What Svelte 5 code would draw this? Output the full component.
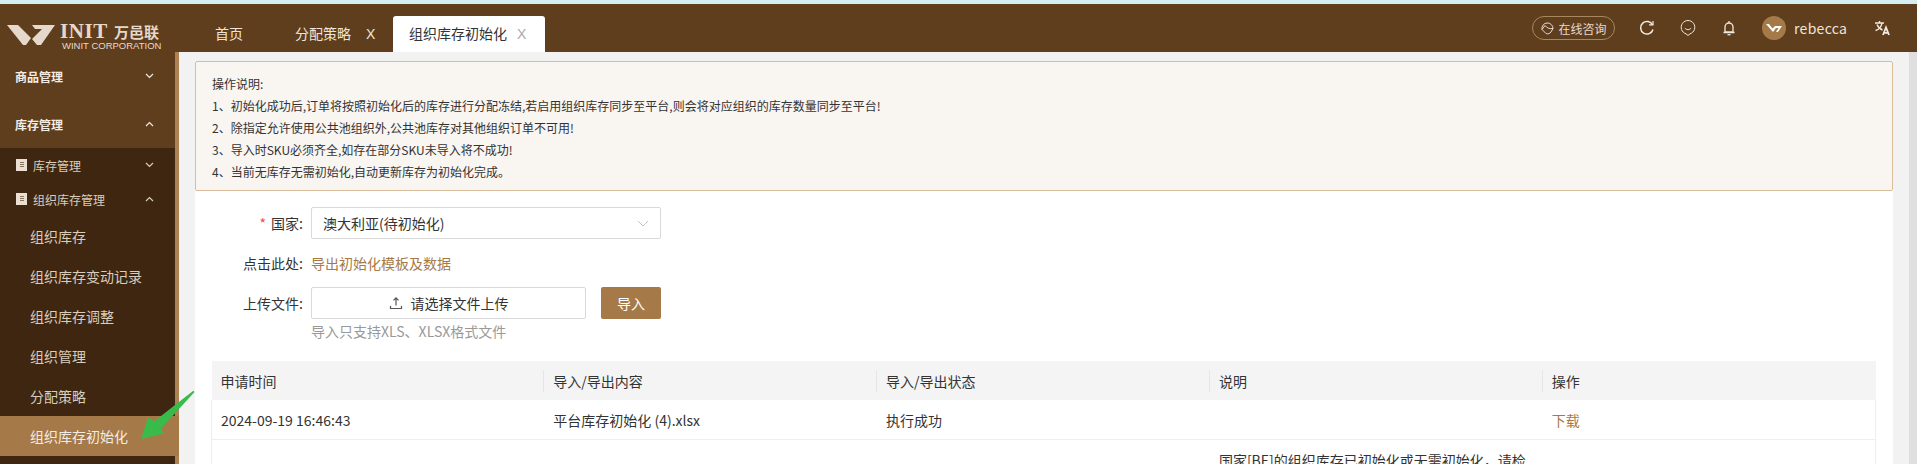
<script>
  const topMenus = [
    { label: '商品管理', open: false },
    { label: '库存管理', open: true }
  ];
  const groups = [
    { label: '库存管理', open: false },
    { label: '组织库存管理', open: true }
  ];
  const leaves = ['组织库存', '组织库存变动记录', '组织库存调整', '组织管理', '分配策略', '组织库存初始化'];
  const notes = [
    '操作说明:',
    '1、初始化成功后,订单将按照初始化后的库存进行分配冻结,若启用组织库存同步至平台,则会将对应组织的库存数量同步至平台!',
    '2、除指定允许使用公共池组织外,公共池库存对其他组织订单不可用!',
    '3、导入时SKU必须齐全,如存在部分SKU未导入将不成功!',
    '4、当前无库存无需初始化,自动更新库存为初始化完成。'
  ];
  const columns = ['申请时间', '导入/导出内容', '导入/导出状态', '说明', '操作'];
</script>

<div class="page">
  <header class="topbar">
    <div class="logo">
      <svg class="mark" width="48" height="22" viewBox="0 0 48 22">
        <path d="M0 1h11l13 13-5 7h-3z" fill="#e6d9cb" />
        <path d="M25 1h23L34 21h-4l-5-6 10-10h-7z" fill="#e6d9cb" />
      </svg>
      <div class="logo-text">
        <div class="logo-top"><span class="init">INIT</span><span class="cn">万邑联</span></div>
        <div class="logo-sub">WINIT CORPORATION</div>
      </div>
    </div>

    <nav class="tabs">
      <div class="tab home">首页</div>
      <div class="tab strategy">分配策略<span class="close">X</span></div>
      <div class="tab active">组织库存初始化<span class="close">X</span></div>
    </nav>

    <div class="tools">
      <div class="consult">
        <svg width="15" height="15" viewBox="0 0 15 15" fill="none" stroke="#e6d9cb" stroke-width="1">
          <path d="M2 8.500A5.500 5.500 0 0 1 7 2a5.500 5.500 0 0 1 6 5.500" />
          <path d="M2 8.500l3-4c2 2.500 4 3.500 8 3L11 11c-1 1.500-3 2.500-5 1.500z" />
        </svg>
        在线咨询
      </div>
      <svg class="tool refresh" width="16" height="16" viewBox="0 0 16 16" fill="none" stroke="#f1e9df" stroke-width="1.500">
        <path d="M13.600 5A6.300 6.300 0 1 0 14 9.500" />
        <path d="M10 4.800h4V1" stroke-width="1.200" />
      </svg>
      <svg class="tool smile" width="16" height="16" viewBox="0 0 16 16" fill="none" stroke="#f1e9df" stroke-width="1">
        <path d="M8 15.500l-2-1.700A6.800 6.800 0 1 1 10 13.800z" />
        <path d="M5 8c1 2.200 5 2.200 6 0" />
      </svg>
      <svg class="tool bell" width="16" height="16" viewBox="0 0 16 16" fill="none" stroke="#f1e9df" stroke-width="1.300">
        <path d="M8 1v1.800M4 12V7a4 4 0 0 1 8 0v5zM2.500 12.500h11" />
        <path d="M6.500 14.700h3" />
      </svg>
      <div class="avatar">
        <svg width="16" height="8" viewBox="0 0 16 8">
          <path d="M0 0h3l3.500 4.500L9 2H16l-4 6h-2l2.500-4H10L7 8z" fill="#fff" />
        </svg>
      </div>
      <span class="user">rebecca</span>
      <svg class="tool lang" width="17" height="16" viewBox="0 0 17 16" fill="none" stroke="#f1e9df" stroke-width="1.400">
        <path d="M1 3h9M5.500 1v2M8 3c-.6 3.500-3 6.500-6.500 7.500M3 4.500c1 2.500 3 4.500 5.500 5.500" />
        <path d="M9 15l3-7.500 3 7.500M10 12.800h4" stroke-width="1.800" />
      </svg>
    </div>
  </header>

  <div class="body">
    <aside class="sidebar">
      {#each topMenus as menu}
        <div class="menu">
          <span>{menu.label}</span>
          <svg class="chev" class:up={menu.open} width="9" height="6" viewBox="0 0 9 6"><path d="M1 1l3.500 3.500L8 1" /></svg>
        </div>
      {/each}
      <div class="submenu">
        {#each groups as group}
          <div class="group">
            <span class="doc"><i></i><i></i><i></i></span>
            <span>{group.label}</span>
            <svg class="chev" class:up={group.open} width="9" height="6" viewBox="0 0 9 6"><path d="M1 1l3.500 3.500L8 1" /></svg>
          </div>
        {/each}
        {#each leaves as leaf, i}
          <div class="leaf" class:current={i === leaves.length - 1}>{leaf}</div>
        {/each}
      </div>
    </aside>

    <main class="content">
      <section class="card">
        <div class="alert">
          {#each notes as note}
            <p>{note}</p>
          {/each}
        </div>

        <div class="form">
          <div class="label"><em>*</em>国家:</div>
          <div class="select">
            <span>澳大利亚(待初始化)</span>
            <svg width="12" height="7" viewBox="0 0 12 7" fill="none" stroke="#c4c4c4"><path d="M1 1l5 5 5-5" /></svg>
          </div>

          <div class="label">点击此处:</div>
          <div class="link">导出初始化模板及数据</div>

          <div class="label">上传文件:</div>
          <div class="upload-row">
            <div class="upload">
              <svg width="14" height="14" viewBox="0 0 14 14" fill="none" stroke="#555" stroke-width="1.200">
                <path d="M7 9.500V2M4.500 4.300L7 1.800l2.500 2.500M1.500 10v2.500h11V10" />
              </svg>
              请选择文件上传
            </div>
            <button class="import">导入</button>
          </div>

          <div></div>
          <div class="hint">导入只支持XLS、XLSX格式文件</div>
        </div>

        <table>
          <thead>
            <tr>
              {#each columns as col}
                <th><span>{col}</span></th>
              {/each}
            </tr>
          </thead>
          <tbody>
            <tr>
              <td>2024-09-19 16:46:43</td>
              <td>平台库存初始化 (4).xlsx</td>
              <td>执行成功</td>
              <td></td>
              <td class="download">下载</td>
            </tr>
            <tr>
              <td></td>
              <td></td>
              <td></td>
              <td class="desc">国家[BE]的组织库存已初始化或无需初始化，请检查</td>
              <td></td>
            </tr>
          </tbody>
        </table>
      </section>
    </main>

    <div class="page-scroll"></div>
  </div>

  <svg class="arrow" width="60" height="56" viewBox="0 0 60 56">
    <polygon points="53.300,4.700 14.300,35.300 8.300,31.300 1,53 24,47.300 20.700,43 54.500,6" fill="#38bb4b" />
  </svg>
</div>

<style>
  :global(body) {
    margin: 0;
  }

  .page {
    position: relative;
    height: 464px;
    overflow: hidden;
    display: flex;
    flex-direction: column;
    border-top: 4px solid #d4eef4;
    box-sizing: border-box;
    background: #f2f2f2;
    font-family: "Noto Sans CJK SC", "Liberation Sans", sans-serif;
    font-size: 14px;
    color: #333;
  }

  .topbar {
    flex: none;
    height: 48px;
    background: #5f3e1e;
    display: flex;
    align-items: stretch;
    color: #eee5da;
  }

  .logo {
    width: 207px;
    padding: 20px 0 0 7px;
    box-sizing: border-box;
    display: flex;
    gap: 6px;
    color: #e6d9cb;
  }

  .mark {
    flex: none;
  }

  .logo-text {
    width: 98px;
  }

  .logo-top {
    display: flex;
    justify-content: space-between;
    height: 15px;
    line-height: 15px;
    white-space: nowrap;
  }

  .init {
    font-family: "Liberation Serif", serif;
    font-weight: 700;
    font-size: 21px;
    letter-spacing: 0.6px;
    margin-left: -1px;
  }

  .cn {
    font-size: 15px;
    font-weight: 700;
  }

  .logo-sub {
    margin-top: 3px;
    margin-left: 1px;
    font-family: "Liberation Sans", sans-serif;
    font-size: 9.500px;
    line-height: 8px;
    white-space: nowrap;
  }

  .tabs {
    display: flex;
    align-items: flex-end;
    flex: 1;
  }

  .tab {
    height: 36px;
    line-height: 34px;
    white-space: nowrap;
  }

  .home {
    width: 88px;
    padding-left: 8px;
    box-sizing: border-box;
  }

  .strategy {
    width: 98px;
  }

  .close {
    margin-left: 15px;
    font-family: "Liberation Sans", sans-serif;
  }

  .active {
    width: 152px;
    padding-left: 16px;
    box-sizing: border-box;
    background: #fff;
    color: #333;
    border-radius: 3px 3px 0 0;
  }

  .active .close {
    color: #aaa;
    margin-left: 10px;
  }

  .tools {
    display: flex;
    align-items: center;
    padding-right: 26px;
  }

  .consult {
    width: 83px;
    height: 24px;
    box-sizing: border-box;
    border: 1px solid #a8865f;
    border-radius: 12px;
    display: flex;
    align-items: center;
    justify-content: center;
    gap: 3px;
    font-size: 12px;
    color: #e6d9cb;
    margin-right: 24px;
  }

  .tool {
    flex: none;
  }

  .refresh {
    margin-right: 25px;
  }

  .smile {
    margin-right: 25px;
  }

  .bell {
    margin-right: 25px;
  }

  .avatar {
    width: 24px;
    height: 24px;
    border-radius: 50%;
    background: #a67a48;
    display: flex;
    align-items: center;
    justify-content: center;
    margin-right: 8px;
  }

  .user {
    width: 52px;
    margin-right: 28px;
    letter-spacing: 0.3px;
    line-height: 16px;
  }

  .body {
    flex: 1;
    display: flex;
    min-height: 0;
  }

  .sidebar {
    flex: none;
    width: 175px;
    border-right: 4px solid #ad8252;
    background: #5f3e1e;
  }

  .menu {
    height: 48px;
    padding: 0 21px 0 15px;
    box-sizing: border-box;
    display: flex;
    align-items: center;
    justify-content: space-between;
    font-size: 12px;
    font-weight: 700;
    color: #f3ece4;
  }

  .chev {
    fill: none;
    stroke: currentColor;
    stroke-width: 1.200;
  }

  .chev.up {
    transform: rotate(180deg);
  }

  .submenu {
    background: #3f2610;
    height: 316px;
  }

  .group {
    height: 34px;
    padding: 0 21px 0 16px;
    box-sizing: border-box;
    display: flex;
    align-items: center;
    font-size: 12px;
    color: #d9cdbd;
  }

  .group .chev {
    margin-left: auto;
  }

  .doc {
    width: 11px;
    height: 12px;
    margin-right: 6px;
    padding: 3px 0 0 4px;
    box-sizing: border-box;
    background: #eadfd2;
    display: flex;
    flex-direction: column;
    gap: 1px;
  }

  .doc i {
    display: block;
    width: 4px;
    height: 1px;
    background: #8b745c;
  }

  .leaf {
    height: 40px;
    line-height: 40px;
    padding-left: 30px;
    color: #d9cdbd;
    white-space: nowrap;
  }

  .current {
    margin-right: -4px;
    background: #a67a48;
    color: #f3ece4;
  }

  .content {
    flex: 1;
    min-width: 0;
    padding: 9px 16px 0 16px;
  }

  .card {
    background: #fff;
    height: 100%;
    overflow: hidden;
  }

  .alert {
    height: 130px;
    box-sizing: border-box;
    padding: 11px 16px 0;
    border: 1px solid #d9bc9b;
    border-radius: 2px;
    background: #f9f5f1;
    font-size: 12px;
    line-height: 22px;
    color: #333;
  }

  .alert p {
    margin: 0;
  }

  .form {
    margin-top: 16px;
    display: grid;
    grid-template-columns: 108px 1fr;
    column-gap: 8px;
    align-items: center;
  }

  .label {
    text-align: right;
    line-height: 32px;
  }

  .label em {
    font-style: normal;
    color: #f04b4b;
    margin-right: 5px;
  }

  .select {
    width: 350px;
    height: 32px;
    padding: 0 11px;
    box-sizing: border-box;
    border: 1px solid #d9d9d9;
    border-radius: 2px;
    display: flex;
    align-items: center;
    justify-content: space-between;
  }

  .link {
    color: #a67a48;
    line-height: 48px;
  }

  .upload-row {
    display: flex;
    gap: 15px;
  }

  .upload {
    width: 275px;
    height: 32px;
    box-sizing: border-box;
    border: 1px solid #d9d9d9;
    border-radius: 2px;
    display: flex;
    align-items: center;
    justify-content: center;
    gap: 8px;
  }

  .import {
    width: 60px;
    height: 32px;
    border: 0;
    border-radius: 2px;
    background: #a67a48;
    color: #fff;
    font: inherit;
    padding: 0;
  }

  .hint {
    line-height: 24px;
    color: #999;
  }

  table {
    margin: 18px 0 0 16px;
    width: 1665px;
    table-layout: fixed;
    border-collapse: collapse;
  }

  th {
    height: 39px;
    padding: 0;
    background: #f4f4f4;
    font-weight: 400;
    text-align: left;
  }

  th span {
    display: block;
    padding-left: 9px;
    line-height: 22px;
    border-right: 1px solid #e6e6e6;
  }

  th:last-child span {
    border-right: 0;
  }

  td {
    height: 39px;
    padding: 0 9px;
    border-bottom: 1px solid #eeeeee;
    vertical-align: middle;
  }

  tbody tr {
    border-left: 1px solid #eeeeee;
    border-right: 1px solid #eeeeee;
  }

  .download {
    color: #a67a48;
  }

  .desc {
    vertical-align: top;
    padding-top: 10px;
  }

  .page-scroll {
    flex: none;
    width: 8px;
    background: #dfdfdf;
  }

  .arrow {
    position: absolute;
    left: 140px;
    top: 382px;
  }
</style>
